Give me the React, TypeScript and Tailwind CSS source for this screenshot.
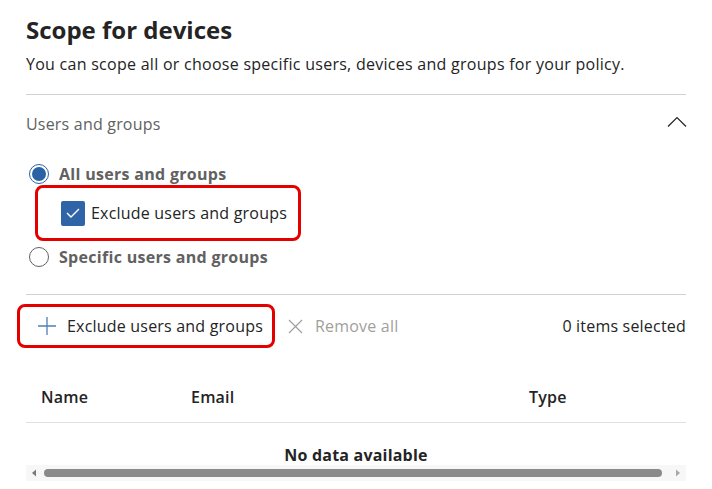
import React from 'react'

const font = "font-['Segoe_UI','Open_Sans',sans-serif]"

function Radio({ checked }: { checked?: boolean }) {
  if (checked) {
    return (
      <span className="flex h-[20px] w-[20px] items-center justify-center rounded-full border border-[#2a62a6] bg-white">
        <span className="h-[14px] w-[14px] rounded-full bg-[#2a62a6]" />
      </span>
    )
  }
  return <span className="h-[20px] w-[20px] rounded-full border border-[#616161] bg-white" />
}

export default function App() {
  return (
    <div className={`h-[489px] w-[712px] overflow-hidden bg-white text-[#242424] tracking-[0.2px] ${font}`}>
      <div className="px-[26px] pt-[14px]">
        <h1 className="text-[24px] font-bold leading-[32px] tracking-normal">Scope for devices</h1>
        <p className="mt-[7px] text-[16px] leading-[22px] tracking-[0.27px]">
          You can scope all or choose specific users, devices and groups for your policy.
        </p>
        <div className="mt-[19px] h-px bg-[#d1d1d1]" />

        {/* accordion header */}
        <div className="flex h-[58px] items-center justify-between">
          <span className="text-[16px] leading-[22px] text-[#616161]">Users and groups</span>
          <svg width="20" height="12" viewBox="0 0 20 12" className="-mt-[5px] mr-[-1px]">
            <path d="M1 10.5 L10 1.5 L19 10.5" fill="none" stroke="#242424" strokeWidth="1.2" />
          </svg>
        </div>

        <div className="mt-[11px] flex items-center gap-[10px] pl-[3px]">
          <Radio checked />
          <span className="text-[16px] font-bold leading-[20px] tracking-[0.3px] text-[#616161]">All users and groups</span>
        </div>

        <div className="ml-[9px] mt-[1px] flex h-[56px] w-[266px] items-center gap-[6px] rounded-[8px] border-[3px] border-[#e50000] pl-[23px]">
          <span className="flex h-[25px] w-[24px] items-center justify-center rounded-[2px] bg-[#2f65a7]">
            <svg width="14" height="10" viewBox="0 0 14 10">
              <path d="M1 5 L5 9 L13 1" fill="none" stroke="white" strokeWidth="1.4" />
            </svg>
          </span>
          <span className="text-[16px] leading-[22px]">Exclude users and groups</span>
        </div>

        <div className="mt-[6px] flex items-center gap-[10px] pl-[3px]">
          <Radio />
          <span className="text-[16px] font-bold leading-[20px] tracking-[0.3px] text-[#616161]">Specific users and groups</span>
        </div>

        <div className="mt-[27px] h-px bg-[#d1d1d1]" />

        {/* command bar */}
        <div className="mt-[9px] flex items-center">
          <div className="ml-[-9px] flex h-[44px] w-[258px] items-center gap-[10px] rounded-[8px] border-[3px] border-[#e50000] pl-[17px]">
            <svg width="20" height="20" viewBox="0 0 20 20">
              <path d="M10 1 V19 M1 10 H19" stroke="#4f7fb8" strokeWidth="1.3" />
            </svg>
            <span className="text-[16px] leading-[22px]">Exclude users and groups</span>
          </div>
          <div className="ml-[13px] flex items-center gap-[12px] text-[#a19f9d]">
            <svg width="15" height="15" viewBox="0 0 15 15">
              <path d="M1 1 L14 14 M14 1 L1 14" stroke="#a19f9d" strokeWidth="1.2" />
            </svg>
            <span className="text-[16px] leading-[22px]">Remove all</span>
          </div>
          <span className="ml-auto text-[16px] leading-[22px]">0 items selected</span>
        </div>

        {/* table */}
        <div className="mt-[23px] flex h-[52px] items-center border-b border-[#e0e0e0] text-[16px] font-semibold leading-[22px]">
          <span className="w-[165px] pl-[15px]">Name</span>
          <span className="w-[338px]">Email</span>
          <span>Type</span>
        </div>
        <div className="mt-[21px] text-center text-[16px] font-bold leading-[22px]">No data available</div>
        <div className="-mt-[1px] flex h-[16px] items-center bg-[#f7f7f7]">
          <svg width="18" height="16" viewBox="0 0 18 16">
            <path d="M6 8 L10 4.5 V11.5 Z" fill="#7a7a7a" />
          </svg>
          <div className="h-[8px] w-[618px] rounded-full bg-[#8a8a8a]" />
          <svg width="24" height="16" viewBox="0 0 24 16" className="ml-auto">
            <path d="M14 4.5 L18 8 L14 11.5 Z" fill="#a8a8a8" />
          </svg>
        </div>
      </div>
    </div>
  )
}
